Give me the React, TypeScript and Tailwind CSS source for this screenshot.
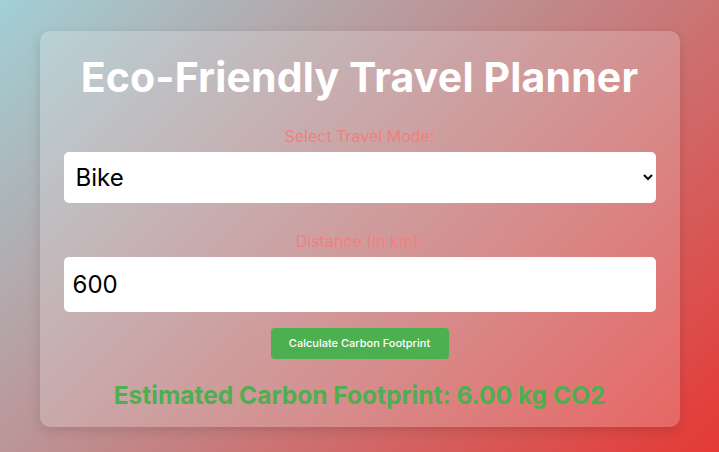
import React from "react";

export default function App() {
  const font = { fontFamily: "Inter, 'Noto Sans', sans-serif" };
  return (
    <div
      className="w-full h-[452px] flex justify-center pt-[31px] bg-[linear-gradient(135deg,#a1d0d6_0%,#e53935_100%)]"
      style={font}
    >
      <div className="w-[640px] h-[396px] rounded-[10px] bg-white/20 shadow-[0_4px_12px_rgba(0,0,0,0.12)] px-6 flex flex-col items-center">
        <h1 className="mt-[26px] h-[40px] leading-[40px] text-[41px] tracking-[0.15px] font-bold text-white whitespace-nowrap">
          Eco-Friendly Travel Planner
        </h1>
        <label className="mt-[29px] text-[16px] leading-[20px] text-[#f08080]">
          Select Travel Mode:
        </label>
        <select
          defaultValue="bike"
          className="mt-[6px] w-full h-[51px] rounded-[5px] bg-white text-black text-[24px] pl-[8px] pr-[8px] outline-none"
        >
          <option value="car">Car</option>
          <option value="bike">Bike</option>
          <option value="bus">Bus</option>
          <option value="train">Train</option>
        </select>
        <label className="mt-[28px] text-[16px] leading-[20px] text-[#f08080]">
          Distance (in km):
        </label>
        <input
          type="number"
          defaultValue="600"
          className="mt-[6px] w-full h-[55px] rounded-[5px] bg-white text-black text-[24px] px-[9px] outline-none"
        />
        <button className="mt-[16px] w-[178px] h-[31px] rounded-[4px] bg-[#4caf50] text-white text-[11px] font-medium">
          Calculate Carbon Footprint
        </button>
        <p className="mt-[21px] text-[24.5px] leading-[30px] font-bold text-[#4caf50] whitespace-nowrap">
          Estimated Carbon Footprint: 6.00 kg CO2
        </p>
      </div>
    </div>
  );
}
